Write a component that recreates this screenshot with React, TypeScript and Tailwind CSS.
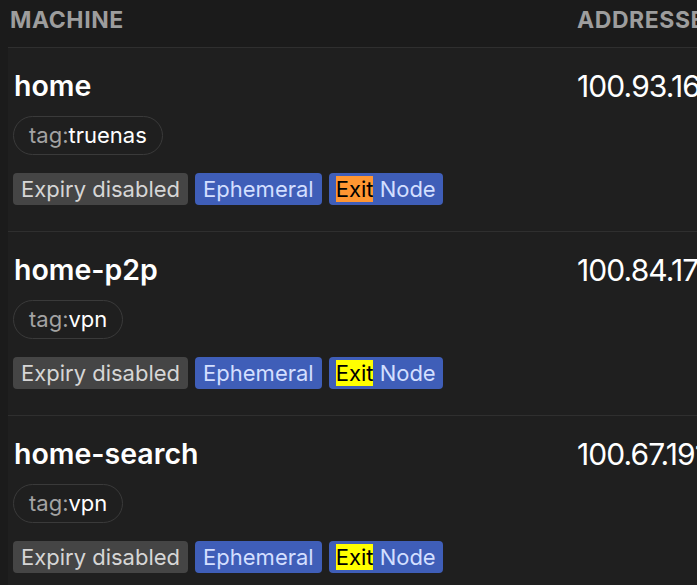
import React from 'react';

type Machine = {
  name: string;
  tag: string;
  ip: string;
  exitColor: string;
};

const machines: Machine[] = [
  { name: 'home', tag: 'truenas', ip: '100.93.164.12', exitColor: 'bg-[#ff9632]' },
  { name: 'home-p2p', tag: 'vpn', ip: '100.84.172.40', exitColor: 'bg-[#ffff00]' },
  { name: 'home-search', tag: 'vpn', ip: '100.67.191.8', exitColor: 'bg-[#ffff00]' },
];

const Row: React.FC<{ m: Machine }> = ({ m }) => (
  <div className="grid grid-cols-[569px_1fr] border-t border-[#2f2f2f] bg-[#1f1f1f] h-[184px]">
    {/* Machine column */}
    <div className="pl-[5px] pt-[20px]">
      <div className="ml-[1px] text-[28.5px] leading-[36px] font-semibold text-white">{m.name}</div>
      <div className="mt-[12px] inline-flex items-center h-[39px] px-[15px] rounded-full border border-[#3a3a3a] text-[22px]">
        <span className="text-[#a3a3a3]">tag:</span>
        <span className="text-white">{m.tag}</span>
      </div>
      <div className="mt-[18px] flex items-center gap-[7px] text-[22px] leading-[32px]">
        <span className="px-[8px] rounded-[4px] bg-[#454545] text-[#d6d6d6]">Expiry disabled</span>
        <span className="px-[8px] rounded-[4px] bg-[#3f5eb8] text-[#d3dfff]">Ephemeral</span>
        <span className="px-[7px] rounded-[4px] bg-[#3f5eb8] text-[#d3dfff]">
          <mark className={`${m.exitColor} text-black`}>Exit</mark> Node
        </span>
      </div>
    </div>
    {/* Addresses column */}
    <div className="pt-[20px] text-[30px] leading-[36px] tracking-[-0.03em] text-white whitespace-nowrap overflow-hidden">
      {m.ip}
    </div>
  </div>
);

export default function App() {
  return (
    <div className="w-[697px] h-[585px] overflow-hidden bg-[#1b1b1b] pl-[8px]" style={{ fontFamily: 'Inter, "Noto Sans", sans-serif' }}>
      <div className="grid grid-cols-[569px_1fr] h-[47px] text-[23px] font-bold tracking-wide text-[#9d9d9d] uppercase">
        <div className="pl-[2px] pt-[3px]">Machine</div>
        <div className="whitespace-nowrap overflow-hidden pt-[3px]">Addresses</div>
      </div>
      {machines.map((m) => (
        <Row key={m.name} m={m} />
      ))}
    </div>
  );
}
